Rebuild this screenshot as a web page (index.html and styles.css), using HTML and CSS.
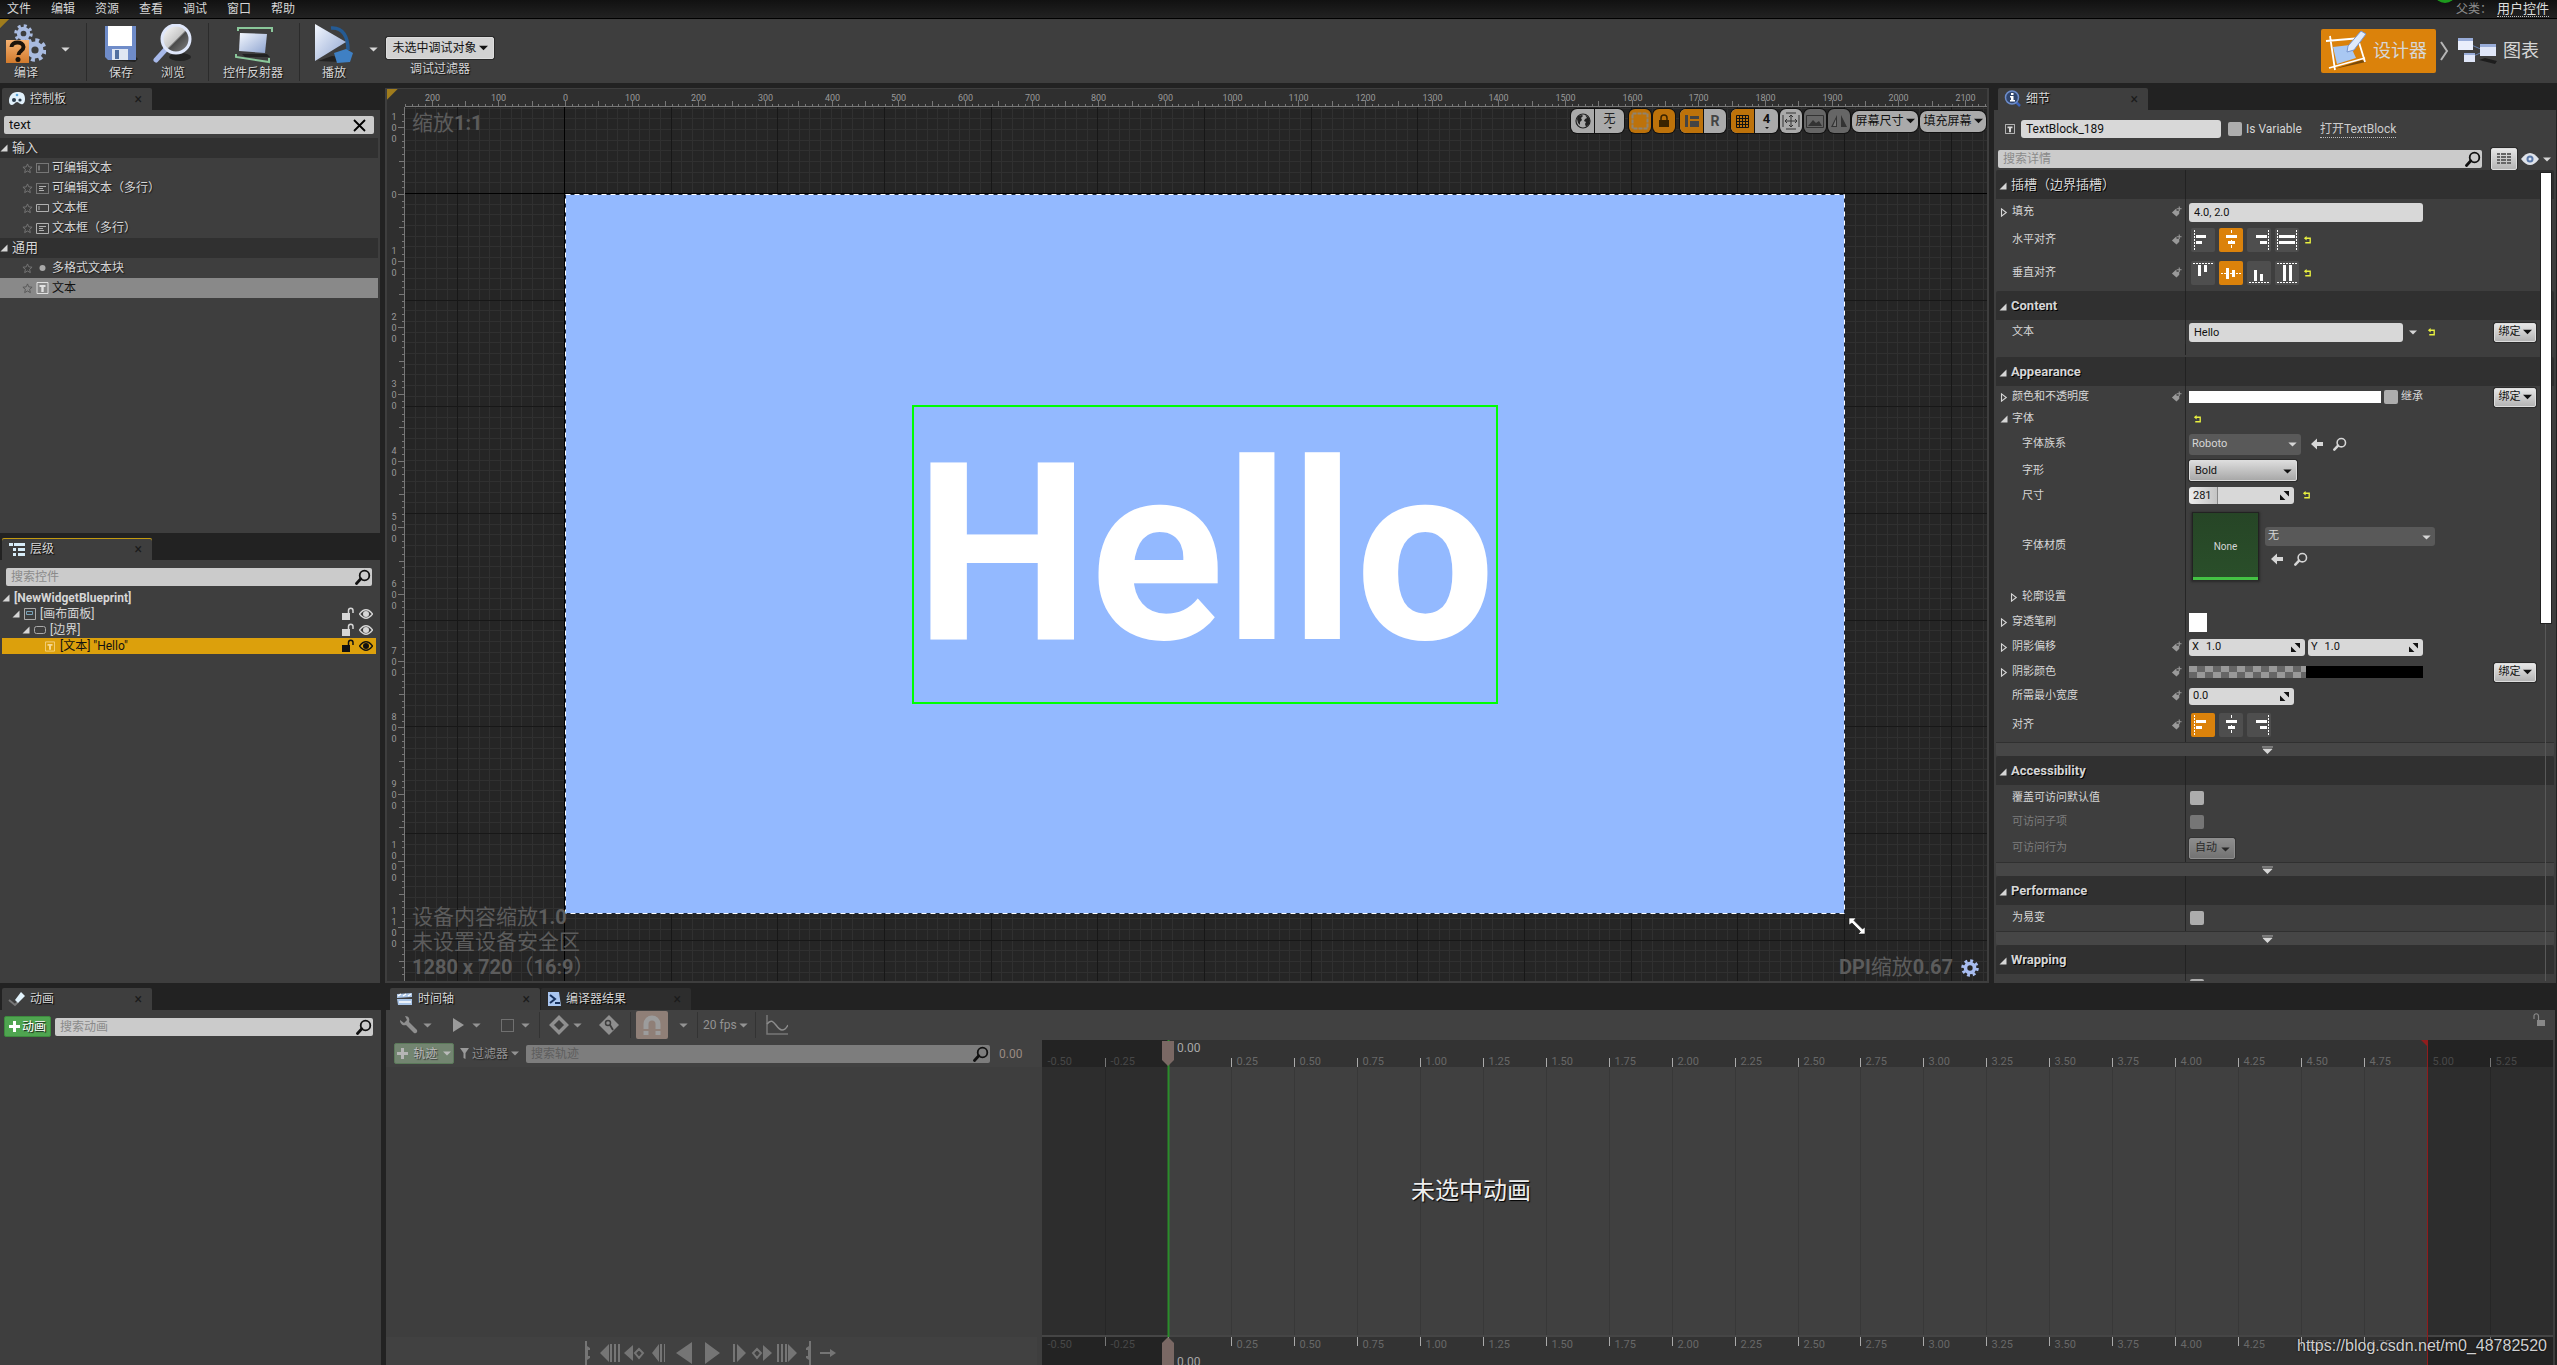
FILE: index.html
```html
<!DOCTYPE html>
<html lang="zh-CN">
<head>
<meta charset="utf-8">
<title>NewWidgetBlueprint</title>
<link rel="stylesheet" href="styles.css">
</head>
<body>
<svg class="sprite" aria-hidden="true">
  <defs>
    <linearGradient id="steel" x1="0" y1="0" x2="1" y2="1"><stop offset="0" stop-color="#f4f8ff"/><stop offset="1" stop-color="#8ea4d0"/></linearGradient>
    <linearGradient id="box" x1="0" y1="0" x2="0" y2="1"><stop offset="0" stop-color="#f6b272"/><stop offset="1" stop-color="#d27a2c"/></linearGradient>
    <linearGradient id="lens" x1="0" y1="0" x2="1" y2="1"><stop offset="0" stop-color="#ffffff"/><stop offset=".5" stop-color="#c8c8c8"/><stop offset=".55" stop-color="#4a4a4a"/><stop offset="1" stop-color="#8a8a8a"/></linearGradient>
  </defs>
  <symbol id="find" viewBox="0 0 16 16"><circle cx="9.500" cy="6.500" r="4.800" fill="none" stroke="currentColor" stroke-width="1.800"/><path d="M5.800 9.800 1.500 14.500" stroke="currentColor" stroke-width="2.800" stroke-linecap="round"/></symbol>
  <symbol id="star" viewBox="0 0 12 12"><path d="M6 1l1.400 3.200 3.600.4-2.700 2.300.8 3.600L6 8.700l-3.100 1.800.8-3.600L1 4.600l3.600-.4z" fill="none" stroke="currentColor"/></symbol>
  <symbol id="tag" viewBox="0 0 12 12"><path d="M1 6.500 6 2v2.500h3V8L6 11z" fill="currentColor"/><path d="M9 0v5M6.500 2.500h5" stroke="currentColor" stroke-width="1.200"/></symbol>
  <symbol id="reset" viewBox="0 0 10 10"><path d="M4 0v5L1 2.500z" fill="#e8f040"/><path d="M3 2.500h5v5H2.500" fill="none" stroke="#e8f040" stroke-width="1.500"/></symbol>
  <symbol id="tri" viewBox="0 0 8 8"><path d="M7.500.5v7h-7z" fill="currentColor"/></symbol>
  <symbol id="shut" viewBox="0 0 6 8"><path d="M.8.800 5 4 .8 7.200z" fill="none" stroke="currentColor"/></symbol>
  <symbol id="caret" viewBox="0 0 10 6"><path d="M0 .5h10L5 5.500z" fill="currentColor"/></symbol>
  <symbol id="tee" viewBox="0 0 12 12"><path d="M.5.500h11v11H.5z" fill="none" stroke="currentColor"/><path d="M3 3h6v2H7.200v5H4.800V5H3z" fill="currentColor"/></symbol>
  <symbol id="unlock" viewBox="0 0 14 14"><path d="M1 6h8v7H1z" fill="currentColor"/><path d="M7.500 6V3.500a2.200 2.200 0 0 1 4.500 0V6" fill="none" stroke="currentColor" stroke-width="1.500"/></symbol>
  <symbol id="eye" viewBox="0 0 14 10"><path d="M.5 5Q7-3.500 13.500 5 7 13.500.5 5z" fill="none" stroke="currentColor" stroke-width="1.300"/><circle cx="7" cy="5" r="3" fill="currentColor"/></symbol>
  <symbol id="back" viewBox="0 0 12 12"><path d="M0 6l6-5.500V4h6v4H6v3.500z" fill="currentColor"/></symbol>
  <symbol id="spin" viewBox="0 0 10 10"><path d="M4 0h6v6zM0 4v6h6z" fill="currentColor"/></symbol>
  <symbol id="more" viewBox="0 0 12 8"><path d="M0 .7h12M1 3h10L6 8z" fill="currentColor" stroke="currentColor" stroke-width=".8"/></symbol>
  <symbol id="hl" viewBox="0 0 24 24"><path d="M3.500 2v20" stroke="#fff" stroke-dasharray="2 1"/><path d="M5 7h10v3H5zM5 13h6v3H5z" fill="#fff"/></symbol>
  <symbol id="hc" viewBox="0 0 24 24"><path d="M12.500 2v20" stroke="#fff" stroke-dasharray="3 2"/><path d="M7 7h11v3H7zM9 13h7v3H9z" fill="#fff"/></symbol>
  <symbol id="hr" viewBox="0 0 24 24"><path d="M21.500 2v20" stroke="#fff" stroke-dasharray="2 1"/><path d="M9 7h11v3H9zM13 13h7v3h-7z" fill="#fff"/></symbol>
  <symbol id="hf" viewBox="0 0 24 24"><path d="M2.500 2v20M21.500 2v20" stroke="#fff" stroke-dasharray="2 1"/><path d="M4 7h16v3H4zM4 13h16v3H4z" fill="#fff"/></symbol>
  <symbol id="vt" viewBox="0 0 24 24"><path d="M2 2.500h20" stroke="#fff" stroke-dasharray="2 1"/><path d="M7 4h3v11H7zM13 4h3v7h-3z" fill="#fff"/></symbol>
  <symbol id="vc" viewBox="0 0 24 24"><path d="M2 12.500h20" stroke="#fff" stroke-dasharray="2 1"/><path d="M7 7h3v11H7zM13 9h3v7h-3z" fill="#fff"/></symbol>
  <symbol id="vb" viewBox="0 0 24 24"><path d="M2 21.500h20" stroke="#fff" stroke-dasharray="2 1"/><path d="M7 9h3v11H7zM13 13h3v7h-3z" fill="#fff"/></symbol>
  <symbol id="vf" viewBox="0 0 24 24"><path d="M2 2.500h20M2 21.500h20" stroke="#fff" stroke-dasharray="2 1"/><path d="M8 4h3v16H8zM14 4h3v16h-3z" fill="#fff"/></symbol>
  <symbol id="gear" viewBox="-10 -10 20 20"><circle r="5" fill="none" stroke="currentColor" stroke-width="4"/><circle r="8" fill="none" stroke="currentColor" stroke-width="3.500" stroke-dasharray="3.140 3.140"/></symbol>
</svg>

<nav class="menubar" aria-label="主菜单">
  <button>文件</button><button>编辑</button><button>资源</button><button>查看</button><button>调试</button><button>窗口</button><button>帮助</button>
  <p class="parent">父类：<a href="#parent">用户控件</a></p>
  <i class="status"></i>
</nav>

<header class="toolbar">
  <button class="tool compile"><svg width="40" height="40" viewBox="0 0 40 40"><g color="#a9bbe0"><use href="#gear" x="8" y="0" width="19" height="19"/><use href="#gear" x="17" y="14" width="24" height="24"/></g><path d="M0 16h23v23H0z" fill="url(#box)"/><path d="M5.500 23c0-6 12-6 12 0 0 4-5 4-5 8" fill="none" stroke="#1c130b" stroke-width="4"/><circle cx="12" cy="35.500" r="2.500" fill="#1c130b"/></svg><span>编译</span></button>
  <button class="drop" aria-label="编译选项"><svg width="9" height="5"><use href="#caret"/></svg></button>
  <i class="bar"></i>
  <button class="tool save"><svg width="40" height="40" viewBox="0 0 40 40"><path d="M9 36 34 38l3-3-3-3z" fill="#222"/><path d="M4 2h31v34H7l-3-3z" fill="#6f8cc9"/><path d="M7 2h24v20H7z" fill="#fff"/><path d="M11 25h16v11H11z" fill="#dfe6f2"/><path d="M14 26h4v9h-4z" fill="#53709f"/></svg><span>保存</span></button>
  <button class="tool browse"><svg width="40" height="40" viewBox="0 0 40 40"><ellipse cx="27" cy="33" rx="11" ry="4" fill="#222"/><path d="M13 25 3 36" stroke="#a7b9ea" stroke-width="5" stroke-linecap="round"/><circle cx="23" cy="15" r="14" fill="url(#lens)" stroke="#dfe7fb" stroke-width="3"/></svg><span>浏览</span></button>
  <i class="bar"></i>
  <button class="tool reflect"><svg width="40" height="40" viewBox="0 0 40 40"><path d="M5 7V4h34v4M3 30v3l33 5v-4" fill="none" stroke="#8ac79a" stroke-width="2"/><path d="M9 30h25l3 3H12z" fill="#222"/><path d="M7 9l27 1-2 19-26-2z" fill="url(#steel)"/></svg><span>控件反射器</span></button>
  <i class="bar"></i>
  <button class="tool play"><svg width="40" height="40" viewBox="0 0 40 40"><path d="M4 37l22 1 8-4-16-2z" fill="#222"/><path d="M17 4c12-1 17 9 17 22" fill="none" stroke="#255b94" stroke-width="3.500"/><path d="M20 29l12-4 7 4-3 9-13 1z" fill="#3f80c4"/><path d="M1 0l31 18L1 37z" fill="url(#steel)"/></svg><span>播放</span></button>
  <button class="drop" aria-label="播放选项"><svg width="9" height="5"><use href="#caret"/></svg></button>
  <div class="debug">
    <button class="btn" id="dbg">未选中调试对象<svg width="9" height="6"><use href="#caret"/></svg></button>
    <label for="dbg">调试过滤器</label>
  </div>
  <div class="modes">
    <button class="mode on"><svg width="42" height="42" viewBox="0 0 42 42"><path d="M9 39 41 32l-4-2z" fill="#7a4a08"/><path d="M1 11l35-3M5 6l5 34M33 9l7 23M4 38l36-10" fill="none" stroke="#fff" stroke-width="1.800"/><path d="M8 17l17-2 6 13-19 6z" fill="#a9c8f2"/><path d="M23 16 36 1l5 3-12 16-7 2z" fill="#dfeafc" stroke="#7695cf"/></svg>设计器</button>
    <svg class="chev" width="9" height="20" viewBox="0 0 9 20"><path d="M1 1l6 9-6 9" fill="none" stroke="#b5b5b5" stroke-width="2"/></svg>
    <button class="mode"><svg width="40" height="28" viewBox="0 0 40 28"><path d="M10 6 28 14 14 20" fill="none" stroke="#6680b0"/><path d="M22 23l16 4 2-3-12-3z" fill="#1d1d1d"/><path d="M1 1h15v12H1z" fill="#e9eefb"/><path d="M23 7h16v12H23z" fill="#dfe6f8"/><path d="M7 16h11v9H7z" fill="#dfe6f8"/><path d="M1 1h15v3H1zM23 7h16v3H23zM7 16h11v2H7z" fill="#98acd8"/></svg>图表</button>
  </div>
</header>

<main class="work">
  <div class="left">
    <section class="dock palette">
      <div class="tabs"><button class="tab"><svg width="18" height="16" viewBox="0 0 18 16"><path d="M9 1C4 1 1 5 1 10c0 4 3 5 5 3s3-3 5-1 6 2 6-4S14 1 9 1z" fill="#e2f1fb"/><circle cx="6" cy="9" r="2" fill="#2c3d4c"/><circle cx="12" cy="9" r="1.600" fill="#2c3d4c"/><circle cx="9" cy="4" r="1.300" fill="#5aa5da"/></svg>控制板<i>×</i></button></div>
      <div class="panel">
        <div class="search wide"><input aria-label="搜索控件类型" value="text"><svg width="13" height="13" viewBox="0 0 13 13"><path d="M1 1l11 11M12 1 1 12" stroke="#000" stroke-width="1.800"/></svg></div>
        <ul class="list">
          <li class="cat"><svg width="8" height="8"><use href="#tri"/></svg>输入</li>
          <li><svg class="st" width="11" height="11"><use href="#star"/></svg><svg width="13" height="10" viewBox="0 0 13 10"><path d="M.5.500h12v9H.5z" fill="none" stroke="#b0b0b0" stroke-dasharray="1 1"/><path d="M3 2.500v5" stroke="#b0b0b0"/></svg>可编辑文本</li>
          <li><svg class="st" width="11" height="11"><use href="#star"/></svg><svg width="13" height="11" viewBox="0 0 13 11"><path d="M.5.500h12v10H.5z" fill="none" stroke="#b0b0b0" stroke-dasharray="1 1"/><path d="M3 3.500h7M3 5.500h4M3 7.500h5" stroke="#b0b0b0"/></svg>可编辑文本（多行）</li>
          <li><svg class="st" width="11" height="11"><use href="#star"/></svg><svg width="13" height="10" viewBox="0 0 13 10"><path d="M.5 1.500h12v7H.5z" fill="none" stroke="#b0b0b0"/><path d="M3 3v4" stroke="#b0b0b0"/></svg>文本框</li>
          <li><svg class="st" width="11" height="11"><use href="#star"/></svg><svg width="13" height="11" viewBox="0 0 13 11"><path d="M.5.500h12v10H.5z" fill="none" stroke="#b0b0b0"/><path d="M3 3.500h7M3 5.500h4M3 7.500h5" stroke="#b0b0b0"/></svg>文本框（多行）</li>
          <li class="cat"><svg width="8" height="8"><use href="#tri"/></svg>通用</li>
          <li><svg class="st" width="11" height="11"><use href="#star"/></svg><svg width="13" height="10" viewBox="0 0 13 10"><circle cx="6.500" cy="5" r="3" fill="#aaa"/></svg>多格式文本块</li>
          <li class="sel"><svg class="st" width="11" height="11"><use href="#star"/></svg><svg class="pale" width="13" height="12"><use href="#tee"/></svg>文本</li>
        </ul>
      </div>
    </section>
    <section class="dock tree-dock">
      <div class="tabs"><button class="tab active"><svg width="18" height="14" viewBox="0 0 18 14"><path d="M1 1h4v3H1zM6 1h11v3H6zM5 6h3v3H5zM10 6h7v3h-7zM5 11h3v3H5zM10 11h7v3h-7z" fill="#d7ecf8"/></svg>层级<i>×</i></button></div>
      <div class="panel">
        <div class="search inset"><input aria-label="搜索控件" placeholder="搜索控件"><svg width="16" height="16"><use href="#find"/></svg></div>
        <ul class="tree">
          <li class="d0"><svg width="8" height="8"><use href="#tri"/></svg><b>[NewWidgetBlueprint]</b></li>
          <li class="d1"><svg width="8" height="8"><use href="#tri"/></svg><svg width="12" height="12" viewBox="0 0 12 12"><path d="M.5.500h11v11H.5z" fill="none" stroke="#aaa"/><path d="M2.500 3.500h6v3h-6z" fill="none" stroke="#7aa2b8"/></svg>[画布面板]<span class="flags"><svg width="14" height="14"><use href="#unlock"/></svg><svg width="14" height="10"><use href="#eye"/></svg></span></li>
          <li class="d2"><svg width="8" height="8"><use href="#tri"/></svg><svg width="12" height="12" viewBox="0 0 12 12"><rect x=".5" y="2.500" width="11" height="7" rx="2" fill="none" stroke="#aaa"/></svg>[边界]<span class="flags"><svg width="14" height="14"><use href="#unlock"/></svg><svg width="14" height="10"><use href="#eye"/></svg></span></li>
          <li class="d3"><svg class="pale" width="10" height="11"><use href="#tee"/></svg>[文本] "Hello"<span class="flags"><svg width="14" height="14"><use href="#unlock"/></svg><svg width="14" height="10"><use href="#eye"/></svg></span></li>
        </ul>
      </div>
    </section>
  </div>

  <section class="viewport">
    <svg id="ruler-x" class="ruler-x"></svg>
    <svg id="ruler-y" class="ruler-y"></svg>
    <div class="surface">
      <svg id="grid" class="grid"></svg>
      <div class="canvas"><div class="picked">Hello</div></div>
      <svg class="frame"><rect x=".5" y=".5" width="1279" height="719" fill="none" stroke="#1a2538"/><rect x=".5" y=".5" width="1279" height="719" fill="none" stroke="#fff" stroke-dasharray="5 4"/></svg>
      <p class="hud zoom">缩放<b>1:1</b></p>
      <p class="hud info">设备内容缩放<b>1.0</b><br>未设置设备安全区<br><b>1280 x 720</b>（<b>16:9</b>）</p>
      <p class="hud dpi"><b>DPI</b>缩放<b>0.67</b><svg width="18" height="18"><use href="#gear"/></svg></p>
      <svg class="grip" width="18" height="18" viewBox="0 0 18 18"><path d="M1 1h7L6 3.500l8.500 8.500L17 10v7h-7l2.500-2.500L4 6 1 8z" fill="#fff" stroke="#111" stroke-width=".6"/></svg>
      <div class="vtools">
        <div class="grp g1"><button aria-label="本地化"><svg width="16" height="16" viewBox="0 0 16 16"><circle cx="8" cy="8" r="7" fill="none" stroke="#222" stroke-width="1.200"/><path d="M3 3l4-1 1 1-2 2 1 2-2 2 0 3-2-2-1-4zM10 2l3 2 2 3-1 4-3 3-1-3 1-2-2-1 1-2 2-1z" fill="#222"/></svg></button><button class="drp">无</button></div>
        <button class="sq hot" aria-label="虚线轮廓"><svg width="18" height="18" viewBox="0 0 18 18"><path d="M1.500 1.500h15v15h-15z" fill="none" stroke="#8f8370" stroke-width="2" stroke-dasharray="4 1"/></svg></button>
        <button class="sq hot" aria-label="遵循锁定"><svg width="12" height="14" viewBox="0 0 12 14"><path d="M1 6h10v7H1z" fill="#3a2400"/><path d="M3 6V4a3 3 0 0 1 6 0v2" fill="none" stroke="#3a2400" stroke-width="1.500"/></svg></button>
        <div class="grp g2"><button class="hot" aria-label="布局"><svg width="16" height="14" viewBox="0 0 16 14"><path d="M1 1h3v12H1zM6 2h9v3H6zM6 7h9v6H6z" fill="#444"/></svg></button><button><b>R</b></button></div>
        <div class="grp g3"><button class="hot" aria-label="网格对齐"><svg width="13" height="13" viewBox="0 0 13 13"><path d="M.5.500h12v12H.5zM3.500 0v13M6.500 0v13M9.500 0v13M0 3.500h13M0 6.500h13M0 9.500h13" fill="none" stroke="#111"/></svg></button><button class="drp"><b>4</b></button></div>
        <button class="sq" aria-label="缩放适配"><svg width="18" height="18" viewBox="0 0 18 18"><path d="M9 3v12M3 9h12M1 3v12M17 3v12M4 1h10M4 17h10M7 5l2-2 2 2M7 13l2 2 2-2M5 7 3 9l2 2M13 7l2 2-2 2" fill="none" stroke="#333"/></svg></button>
        <button class="sq dim" aria-label="预览背景"><svg width="18" height="13" viewBox="0 0 18 13"><path d="M.5.500h17v12H.5z" fill="none" stroke="#333"/><path d="M2 11l5-6 3 3 3-2 3 5z" fill="#333"/></svg></button>
        <button class="sq dim" aria-label="翻转"><svg width="18" height="14" viewBox="0 0 18 14"><path d="M7 1v12H1zM11 1v12h6z" fill="#333"/><path d="M6 5v7H3z" fill="#777"/></svg></button>
        <button class="pill">屏幕尺寸<svg width="9" height="6"><use href="#caret"/></svg></button>
        <button class="pill">填充屏幕<svg width="9" height="6"><use href="#caret"/></svg></button>
      </div>
    </div>
  </section>

  <section class="dock details">
    <div class="tabs"><button class="tab"><svg width="18" height="18" viewBox="0 0 18 18"><path d="M12 12l4 4" stroke="#3c62b8" stroke-width="2.500"/><circle cx="8" cy="7.500" r="6.500" fill="#30456c" stroke="#6c8ccb" stroke-width="1.500"/><path d="M7 3h2.500v2H7zM6 6h3.500v4H11v1.500H6V10h1V7.500H6z" fill="#fff"/></svg>细节<i>×</i></button></div>
    <div class="panel">
      <div class="ident"><svg width="10" height="10"><use href="#tee"/></svg><input class="field" aria-label="名称" value="TextBlock_189"><input type="checkbox" id="isvar"><label for="isvar">Is Variable</label><a href="#textblock">打开TextBlock</a></div>
      <div class="find-row"><div class="search"><input aria-label="搜索详情" placeholder="搜索详情"><svg width="16" height="16"><use href="#find"/></svg></div><button class="btn matrix" aria-label="属性矩阵"><svg width="14" height="14" viewBox="0 0 14 14"><path d="M0 1h3v2H0zM4 1h5v2H4zM10 1h4v2h-4zM0 4h3v2H0zM4 4h5v2H4zM10 4h4v2h-4zM0 7h3v2H0zM4 7h5v2H4zM10 7h4v2h-4zM0 10h3v2H0zM4 10h5v2H4zM10 10h4v2h-4z" fill="#666"/></svg></button><button class="view" aria-label="视图选项"><svg width="18" height="12" viewBox="0 0 18 12"><path d="M0 6q9-12 18 0-9 12-18 0z" fill="#dfe3ea"/><circle cx="9" cy="6" r="3.500" fill="#5a78a8"/><circle cx="9" cy="6" r="1.500" fill="#d8e4f5"/></svg><svg width="8" height="5"><use href="#caret"/></svg></button></div>
      <div class="props">
        <div class="scroll"></div>
        <h2><svg width="8" height="8"><use href="#tri"/></svg><span class="cn">插槽（边界插槽）</span></h2>
        <div class="row h26"><label class="name" for="pad"><svg class="ex" width="6" height="9"><use href="#shut"/></svg>填充<svg class="tag" width="11" height="12"><use href="#tag"/></svg></label><div class="val"><input class="field w234" id="pad" value="4.0, 2.0"></div></div>
        <div class="row h30"><span class="name">水平对齐<svg class="tag" width="11" height="12"><use href="#tag"/></svg></span><div class="val aligns"><button aria-label="左"><svg><use href="#hl"/></svg></button><button class="hot" aria-label="居中"><svg><use href="#hc"/></svg></button><button aria-label="右"><svg><use href="#hr"/></svg></button><button aria-label="填充"><svg><use href="#hf"/></svg></button><svg width="9" height="9"><use href="#reset"/></svg></div></div>
        <div class="row h36"><span class="name">垂直对齐<svg class="tag" width="11" height="12"><use href="#tag"/></svg></span><div class="val aligns"><button aria-label="上"><svg><use href="#vt"/></svg></button><button class="hot" aria-label="居中"><svg><use href="#vc"/></svg></button><button aria-label="下"><svg><use href="#vb"/></svg></button><button aria-label="填充"><svg><use href="#vf"/></svg></button><svg width="9" height="9"><use href="#reset"/></svg></div></div>
        <h2><svg width="8" height="8"><use href="#tri"/></svg>Content</h2>
        <div class="row h24 last"><label class="name" for="txt">文本</label><div class="val"><input class="field w214" id="txt" value="Hello"><svg class="g6" width="8" height="5"><use href="#caret"/></svg><svg class="g10" width="9" height="9"><use href="#reset"/></svg><button class="btn bind">绑定<svg width="9" height="6"><use href="#caret"/></svg></button></div></div>
        <h2><svg width="8" height="8"><use href="#tri"/></svg>Appearance</h2>
        <div class="row h22"><span class="name"><svg class="ex" width="6" height="9"><use href="#shut"/></svg>颜色和不透明度<svg class="tag" width="11" height="12"><use href="#tag"/></svg></span><div class="val"><button class="swatch white" aria-label="颜色"></button><input type="checkbox" id="inh"><label for="inh">继承</label><button class="btn bind">绑定<svg width="9" height="6"><use href="#caret"/></svg></button></div></div>
        <div class="row h22"><span class="name"><svg class="ex" width="8" height="8"><use href="#tri"/></svg>字体</span><div class="val"><svg class="g4" width="9" height="9"><use href="#reset"/></svg></div></div>
        <div class="row h28"><label class="name sub" for="fam">字体族系</label><div class="val"><span class="pick w112"><select id="fam"><option>Roboto</option></select><svg width="9" height="5"><use href="#caret"/></svg></span><svg class="g10" width="12" height="12"><use href="#back"/></svg><svg class="g10" width="14" height="14"><use href="#find"/></svg></div></div>
        <div class="row h25"><label class="name sub" for="face">字形</label><div class="val"><span class="pick light w108"><select id="face"><option>Bold</option></select><svg width="9" height="5"><use href="#caret"/></svg></span></div></div>
        <div class="row h25"><label class="name sub" for="size">尺寸</label><div class="val"><span class="num w105 part"><input id="size" value="281"><svg width="9" height="9"><use href="#spin"/></svg></span><svg class="g8" width="9" height="9"><use href="#reset"/></svg></div></div>
        <div class="row h76"><label class="name sub" for="mat">字体材质</label><div class="val"><button class="thumb">None</button><div class="mat"><span class="pick w170"><select id="mat"><option>无</option></select><svg width="9" height="5"><use href="#caret"/></svg></span><div class="acts"><svg width="12" height="12"><use href="#back"/></svg><svg width="14" height="14"><use href="#find"/></svg></div></div></div></div>
        <div class="row h26"><span class="name sub"><svg class="ex" width="6" height="9"><use href="#shut"/></svg>轮廓设置</span><div class="val"></div></div>
        <div class="row h24"><span class="name"><svg class="ex" width="6" height="9"><use href="#shut"/></svg>穿透笔刷</span><div class="val"><button class="brush" aria-label="笔刷"></button></div></div>
        <div class="row h26"><span class="name"><svg class="ex" width="6" height="9"><use href="#shut"/></svg>阴影偏移<svg class="tag" width="11" height="12"><use href="#tag"/></svg></span><div class="val"><label class="num w116">X<input value="1.0"><svg width="9" height="9"><use href="#spin"/></svg></label><label class="num w115 g2x">Y<input value="1.0"><svg width="9" height="9"><use href="#spin"/></svg></label></div></div>
        <div class="row h24"><span class="name"><svg class="ex" width="6" height="9"><use href="#shut"/></svg>阴影颜色<svg class="tag" width="11" height="12"><use href="#tag"/></svg></span><div class="val"><button class="swatch check" aria-label="阴影颜色"></button><button class="btn bind">绑定<svg width="9" height="6"><use href="#caret"/></svg></button></div></div>
        <div class="row h24"><label class="name" for="minw">所需最小宽度<svg class="tag" width="11" height="12"><use href="#tag"/></svg></label><div class="val"><span class="num w105"><input id="minw" value="0.0"><svg width="9" height="9"><use href="#spin"/></svg></span></div></div>
        <div class="row h34"><span class="name">对齐<svg class="tag" width="11" height="12"><use href="#tag"/></svg></span><div class="val aligns"><button class="hot" aria-label="左"><svg><use href="#hl"/></svg></button><button aria-label="居中"><svg><use href="#hc"/></svg></button><button aria-label="右"><svg><use href="#hr"/></svg></button></div></div>
        <button class="more" aria-label="展开"><svg width="11" height="8"><use href="#more"/></svg></button>
        <h2><svg width="8" height="8"><use href="#tri"/></svg>Accessibility</h2>
        <div class="row h25"><label class="name" for="ovr">覆盖可访问默认值</label><div class="val tick"><input type="checkbox" id="ovr"></div></div>
        <div class="row h24 off"><label class="name" for="kid">可访问子项</label><div class="val tick"><input type="checkbox" id="kid" disabled></div></div>
        <div class="row h28 off"><label class="name" for="beh">可访问行为</label><div class="val"><span class="pick light w46"><select id="beh" disabled><option>自动</option></select><svg width="9" height="5"><use href="#caret"/></svg></span></div></div>
        <button class="more" aria-label="展开"><svg width="11" height="8"><use href="#more"/></svg></button>
        <h2><svg width="8" height="8"><use href="#tri"/></svg>Performance</h2>
        <div class="row h26"><label class="name" for="vol">为易变</label><div class="val tick"><input type="checkbox" id="vol"></div></div>
        <button class="more" aria-label="展开"><svg width="11" height="8"><use href="#more"/></svg></button>
        <h2><svg width="8" height="8"><use href="#tri"/></svg>Wrapping</h2>
        <div class="row h24"><label class="name" for="wrap"></label><div class="val tick"><input type="checkbox" id="wrap"></div></div>
      </div>
    </div>
  </section>
</main>

<section class="bottom">
  <section class="dock anim">
    <div class="tabs"><button class="tab"><svg width="18" height="16" viewBox="0 0 18 16"><path d="M1 9l6 5 3-3" fill="none" stroke="#777" stroke-width="2"/><path d="M7 9l6-8 4 4-7 7z" fill="#e2f3fc"/></svg>动画<i>×</i></button></div>
    <div class="panel"><div class="add-row"><button class="add"><svg width="11" height="11" viewBox="0 0 11 11"><path d="M5.500 0v11M0 5.500h11" stroke="#fff" stroke-width="3"/></svg>动画</button><div class="search"><input aria-label="搜索动画" placeholder="搜索动画"><svg width="16" height="16"><use href="#find"/></svg></div></div></div>
  </section>
  <section class="dock time">
    <div class="tabs"><button class="tab"><svg width="18" height="14" viewBox="0 0 18 14"><path d="M1 2l15-1v4L1 6zM1 7h15v6H2z" fill="#a9c4e6"/><path d="M2 4l3-2M7 4l3-2M12 4l3-2M3 10h12" stroke="#fff" stroke-width="1.500"/></svg>时间轴<i>×</i></button><button class="tab back"><svg width="15" height="16" viewBox="0 0 15 16"><path d="M1 1h11l2 14H1z" fill="#a9c6f0"/><path d="M3 4l5 4-5 4M8 12h5" fill="none" stroke="#16305c" stroke-width="2"/></svg>编译器结果<i>×</i></button></div>
    <div class="panel seq">
      <div class="seq-tools">
        <button class="ic" aria-label="操作"><svg width="18" height="18" viewBox="0 0 18 18"><path d="M5 0C9 0 10 3 9 6l8 8c1 2-1 4-3 3L6 9C3 10 0 8 0 4l4 3 3-3z" fill="#8f8f8f"/></svg><svg width="9" height="5"><use href="#caret"/></svg></button>
        <button class="ic i2" aria-label="播放选项"><svg width="12" height="14" viewBox="0 0 12 14"><path d="M0 0l11 7-11 7z" fill="#9a9a9a"/></svg><svg width="9" height="5"><use href="#caret"/></svg></button>
        <button class="ic i3" aria-label="选择"><svg width="13" height="13" viewBox="0 0 13 13"><path d="M.5.500h12v12H.5z" fill="none" stroke="#a0a0a0" stroke-dasharray="1 1"/></svg><svg width="9" height="5"><use href="#caret"/></svg></button>
        <i class="bar"></i>
        <button class="ic i4" aria-label="关键帧"><svg width="20" height="20" viewBox="0 0 20 20"><path d="M10 2.500 17.500 10 10 17.500 2.500 10z" fill="none" stroke="#8f8f8f" stroke-width="3.500"/></svg><svg width="9" height="5"><use href="#caret"/></svg></button>
        <button class="ic i5" aria-label="自动关键帧"><svg width="20" height="20" viewBox="0 0 20 20"><path d="M10 0 20 10 10 20 0 10z" fill="#8f8f8f"/><circle cx="9" cy="8" r="2.500" fill="none" stroke="#3e3e3e" stroke-width="1.500"/><path d="M11 10l3 5" stroke="#3e3e3e" stroke-width="1.800"/></svg></button>
        <i class="bar"></i>
        <button class="magnet" aria-label="对齐"><svg width="20" height="20" viewBox="0 0 20 20"><path d="M4 14V9a6 6 0 0 1 12 0v5" fill="none" stroke="#9c9c9c" stroke-width="5"/><path d="M1.500 16h5v4h-5zM13.500 16h5v4h-5z" fill="#9c9c9c"/></svg></button>
        <button class="ic i6" aria-label="对齐选项"><svg width="9" height="5"><use href="#caret"/></svg></button>
        <i class="bar"></i>
        <button class="ic fps">20 fps<svg width="9" height="5"><use href="#caret"/></svg></button>
        <i class="bar"></i>
        <button class="ic i7" aria-label="曲线"><svg width="22" height="20" viewBox="0 0 22 20"><path d="M1 0v19h21" fill="none" stroke="#777" stroke-width="1.500"/><path d="M1 9C8 0 10 15 16 15c3 0 5-3 6-5" fill="none" stroke="#8c8c8c" stroke-width="1.500"/></svg></button>
        <svg class="lock" width="13" height="14" viewBox="0 0 13 14"><path d="M4 7h8v6H4z" fill="#888"/><path d="M1 6V3a2 2 0 0 1 4.500 0v4" fill="none" stroke="#888" stroke-width="1.200"/></svg>
      </div>
      <div class="seq-body">
        <div class="tracks">
          <div class="track-row"><button class="track"><svg width="11" height="11" viewBox="0 0 11 11"><path d="M5.500 0v11M0 5.500h11" stroke="#b5b5b5" stroke-width="3"/></svg>轨迹<svg width="8" height="5"><use href="#caret"/></svg></button><button class="filter"><svg width="9" height="11" viewBox="0 0 9 11"><path d="M0 0h9L5.500 5v6l-2-1V5z" fill="#999"/></svg>过滤器<svg width="8" height="5"><use href="#caret"/></svg></button><div class="search"><input aria-label="搜索轨迹" placeholder="搜索轨迹"><svg width="16" height="16"><use href="#find"/></svg></div><span class="now">0.00</span></div>
          <div class="transport"><svg width="256" height="26" viewBox="0 0 256 26" fill="#757575"><path d="M0 1h2v5l3 2v2H3v6h2v2l-3 2v5H0zM15 13l9-9v18zM25 4h2v18h-2zM29 4h2v18h-2zM33 4h2v18h-2zM39 13l9-8v16zM67 13l7-9v18zM75 4h2v18h-2zM79 4h1v18h-1zM91 13l16-11v22zM135 13 120 2v22zM148 4h2v18h-2zM152 4l9 9-9 9zM178 5l9 8-9 8zM192 4h2v18h-2zM196 4h2v18h-2zM200 4h2v18h-2zM203 4l9 9-9 9zM226 1h-2v5l-3 2v2h2v6h-2v2l3 2v5h2zM235 12h10V9l6 4-6 4v-3h-10z"/><path d="M54 9l4 4-4 5-4-5zM172 9l4 4-4 5-4-5z" fill="none" stroke="#757575" stroke-width="2"/></svg></div>
        </div>
        <div class="timeline"><svg id="timeline"></svg><p class="empty">未选中动画</p></div>
      </div>
    </div>
  </section>
</section>
<p class="mark">https://blog.csdn.net/m0_48782520</p>
<script src="script.js"></script>
</body>
</html>
```
FILE: styles.css
```css
* { box-sizing: border-box; }
body { margin: 0; height: 100vh; overflow: hidden; display: flex; flex-direction: column; background: #222; color: #d6d6d6; font: 12px/16px Roboto, "Noto Sans CJK SC", sans-serif; }
button, input, select { font: inherit; color: inherit; margin: 0; padding: 0; border: 0; background: none; border-radius: 0; outline: 0; min-width: 0; }
button { text-shadow: inherit; white-space: nowrap; }
p, ul, h2 { margin: 0; padding: 0; list-style: none; }
svg { flex: none; display: block; }
i { font-style: normal; }
.sprite { position: absolute; width: 0; height: 0; }

.menubar { position: relative; flex: none; height: 19px; display: flex; align-items: center; gap: 20px; padding: 0 7px; background: linear-gradient(#111, #222); border-bottom: 1px solid #000; }
.parent { margin-left: auto; padding-right: 1px; color: #8c8c8c; }
.parent a { margin-left: 5px; color: #ddd; font-size: 13px; text-decoration: none; border-bottom: 1px dotted #bbb; }
.status { position: absolute; right: 102px; top: -14px; width: 20px; height: 17px; border-radius: 50%; background: #1d9a1d; }

.toolbar { flex: none; height: 64px; display: flex; align-items: flex-start; padding: 0 14px 0 0; background: linear-gradient(135deg, #a07c1c 6px, #3e3e3e 7px); text-shadow: 1px 1px 1px #111; }
.tool { display: flex; flex-direction: column; align-items: center; width: 52px; padding-top: 5px; }
.tool span { line-height: 18px; }
.reflect { width: 88px; margin-right: 2px; }
.play { width: 68px; }
.save { margin-left: 8px; }
.browse { margin-right: 9px; }
.drop { width: 26px; height: 60px; margin-right: 8px; display: flex; justify-content: center; align-items: center; }
.play + .drop { width: 10px; }
.bar { flex: none; width: 1px; height: 58px; margin-top: 4px; background: #2b2b2b; }
.debug { display: flex; flex-direction: column; align-items: center; padding-top: 18px; gap: 2px; }
.btn { display: flex; align-items: center; justify-content: center; gap: 2px; color: #111; background: linear-gradient(#e6e6e6, #b4b4b4); border: 1px solid #ddd; border-radius: 2px; box-shadow: 0 0 0 1px #2a2a2a; text-shadow: none; }
.debug .btn { width: 108px; height: 22px; background: #d2d2d2; }
.modes { margin-left: auto; height: 44px; margin-top: 10px; display: flex; align-items: center; gap: 4px; }
.mode { display: flex; align-items: center; gap: 6px; height: 44px; padding: 0 4px; font-size: 18px; text-shadow: none; }
.mode.on { width: 115px; background: #db820b; border-radius: 2px; }

.work { flex: none; height: 905px; padding: 5px 1px 5px 0; display: flex; gap: 5px; }
.left { flex: none; width: 380px; display: flex; flex-direction: column; gap: 5px; }
.dock { display: flex; flex-direction: column; min-height: 0; }
.left .dock { flex: 1; }
.tabs { flex: none; display: flex; gap: 1px; height: 22px; padding-left: 2px; }
.tab { width: 150px; display: flex; align-items: center; gap: 4px; padding: 0 10px 0 6px; background: #3e3e3e; border-radius: 2px 2px 0 0; text-shadow: 1px 1px 1px #000; }
.tab i { margin-left: auto; color: #1b1b1b; font-size: 14px; text-shadow: none; }
.tab.active { box-shadow: inset 0 1px #c29a10; }
.tab.back { background: #2d2d2d; }
.panel { flex: 1; min-height: 0; background: #3e3e3e; }
.search { height: 18px; display: flex; align-items: center; padding: 0 1px 0 5px; background: #cbcbcb; border-radius: 2px; color: #111; }
.search input { flex: 1; }
.search input::placeholder { color: #8a8a8a; opacity: 1; }
.search.wide { margin: 6px 6px 4px 4px; padding-right: 8px; font-size: 13px; }
.search.inset { margin: 8px 8px 4px 6px; }
.list { margin-right: 2px; text-shadow: 1px 1px 1px #1a1a1a; }
.list li { height: 20px; display: flex; align-items: center; gap: 3px; padding-left: 22px; }
.list .st { color: #777; }
.list .cat { padding-left: 0; gap: 4px; background: #303030; font-size: 13px; }
.list .sel { background: #898989; color: #111; text-shadow: none; }
.list .sel .st { color: #555; }
.pale { color: #e0e0e0; }
.tree li { height: 16px; display: flex; align-items: center; gap: 4px; margin: 0 4px 0 2px; }
.tree .d1 { padding-left: 10px; }
.tree .d2 { padding-left: 20px; }
.tree .d3 { padding-left: 43px; gap: 5px; background: #dca00c; color: #111; }
.tree .d3 .pale { color: #f6d890; }
.flags { margin-left: auto; display: flex; align-items: center; gap: 4px; padding-right: 3px; }

.viewport { flex: 1; min-width: 0; position: relative; display: grid; grid-template: 18px 1fr / 18px 1fr; background: linear-gradient(135deg, #a07c1c 7px, #2f2f2f 8px); border: 2px solid #3e3e3e; border-top-width: 1px; overflow: hidden; }
.ruler-x { grid-column: 1 / 3; width: 100%; height: 18px; }
.ruler-y { width: 18px; height: 100%; }
.ruler-x text, .ruler-y text { font-size: 9px; fill: #999; text-anchor: middle; }
.surface { position: relative; overflow: hidden; background: #252525; }
.grid { position: absolute; left: 0; top: 0; width: 100%; height: 100%; }
.canvas, .frame { position: absolute; left: 160px; top: 87px; width: 1280px; height: 720px; }
.canvas { display: flex; align-items: center; justify-content: center; background: #93b9ff; }
.picked { border: 2px solid #0f0; padding: 1px; color: #fff; font-size: 248px; font-weight: 700; line-height: 293px; }
.hud { position: absolute; color: #5c5c5c; font-size: 21px; line-height: 25px; }
.hud b { font-size: 20px; }
.zoom { left: 7px; top: 4px; }
.info { left: 7px; bottom: 1px; }
.dpi { right: 8px; bottom: 1px; display: flex; align-items: center; }
.dpi svg { margin-left: 8px; color: #a8bdf0; }
.grip { position: absolute; left: 1443px; top: 810px; }
.vtools { position: absolute; right: 1px; top: 2px; display: flex; align-items: center; gap: 2px; color: #222; }
.vtools button { display: flex; align-items: center; justify-content: center; height: 24px; }
.grp { display: flex; background: #aaa; border-radius: 6px; overflow: hidden; box-shadow: 0 0 0 1px #111; margin-right: 3px; }
.grp button { width: 23px; }
.grp button + button { border-left: 1px solid #111; }
.g1 .drp { width: 30px; }
.g3 .drp { width: 24px; }
.g3 { margin-right: 0; }
.drp { position: relative; padding-bottom: 4px; }
.drp::after { content: ""; position: absolute; bottom: 4px; left: 50%; margin-left: -2px; border: 2px solid transparent; border-top-color: #111; border-bottom: 0; }
.g3 .drp b { color: #111; font-size: 13px; }
.g2 b { color: #444; font-size: 14px; }
.sq { width: 22px; background: #aaa; border-radius: 6px; box-shadow: 0 0 0 1px #111; }
.hot + .grp { margin-left: 3px; }
.vtools .hot { background: #bd720a; }
.dim { background: #666; }
.vtools .pill { width: 66px; height: 21px; gap: 2px; background: #aaa; border-radius: 7px; box-shadow: 0 0 0 1px #111; color: #111; }

.details { flex: none; width: 562px; }
.details .tabs { padding-left: 4px; }
.ident { display: flex; align-items: center; height: 38px; padding: 0 0 0 11px; }
.field { height: 19px; padding: 0 5px; background: #d8d8d8; border-radius: 3px; color: #111; }
.ident .field { width: 200px; height: 18px; margin: 0 7px 0 6px; }
input[type=checkbox] { appearance: none; flex: none; width: 14px; height: 14px; background: #adadad; border-radius: 2px; }
.ident label { margin-left: 4px; }
.ident a { margin-left: 18px; color: #ccc; text-decoration: none; border-bottom: 1px dotted #bbb; }
.find-row { display: flex; align-items: center; height: 22px; padding: 0 5px 0 4px; }
.find-row .search { flex: 1; }
.matrix { width: 26px; height: 22px; margin: 0 4px 0 9px; }
.view { display: flex; align-items: center; gap: 4px; }
.props { position: relative; height: 811px; overflow: hidden; margin: 0 2px; font-size: 11px; }
.scroll { position: absolute; z-index: 1; right: 3px; top: 3px; width: 10px; height: 450px; background: #fff; box-shadow: 0 0 0 1px #222; }
.props::after { content: ""; position: absolute; right: 8px; top: 453px; bottom: 0; width: 1px; background: #585858; }
h2 { display: flex; align-items: center; gap: 4px; height: 29px; padding-left: 3px; font-size: 13px; font-weight: 700; background: linear-gradient(90deg, transparent 189px, #222 189px, #222 190px, transparent 190px), #303030; text-shadow: 1px 1px 0 #000; border-radius: 2px 2px 0 0; }
h2 .cn { font-weight: 400; }
h2 svg { margin-top: 3px; }
.row { display: grid; grid-template-columns: 190px 1fr; }
.row.last { height: 37px; padding-bottom: 13px; background: linear-gradient(#222, #222) 189px 0 / 1px 35px no-repeat; }
.name { position: relative; display: flex; align-items: center; padding-left: 16px; border-right: 1px solid #262626; white-space: nowrap; }
.name.sub { padding-left: 26px; }
.name .ex { width: 8px; margin-left: -12px; margin-right: 4px; }
.name .tag { margin-left: auto; margin-right: 3px; color: #999; }
.val { display: flex; align-items: center; padding: 0 18px 0 3px; }
.val.tick { padding-left: 4px; }
.h22 { height: 22px; } .h24 { height: 24px; } .h25 { height: 25px; } .h26 { height: 26px; } .h28 { height: 28px; } .h30 { height: 30px; } .h34 { height: 34px; } .h36 { height: 36px; } .h76 { height: 76px; }
.w234 { width: 234px; } .w214 { width: 214px; } .w112 { width: 112px; } .w108 { width: 108px; } .w105 { width: 105px; } .w116 { width: 116px; } .w115 { width: 115px; } .w170 { width: 170px; } .w46 { width: 46px; }
.g2x { margin-left: 3px; } .g4 { margin-left: 4px; } .g6 { margin-left: 6px; } .g8 { margin-left: 8px; } .g10 { margin-left: 10px; }
.val > .btn { margin-left: auto; width: 42px; height: 19px; }
.aligns { gap: 4px; padding-left: 5px; }
.aligns button { width: 24px; height: 24px; background: #4e4e4e; border-radius: 2px; }
.aligns button svg { width: 24px; height: 24px; }
.aligns .hot { background: #db820b; }
.swatch { height: 12px; }
.swatch + input { margin: 0 3px; }
.white { width: 192px; background: #fff; }
.check { width: 234px; background: linear-gradient(90deg, transparent 117px, #000 117px), repeating-conic-gradient(#666 0 25%, #999 0 50%) 0 0 / 16px 12px; }
.pick { position: relative; display: block; height: 21px; background: #595959; border-radius: 3px; text-shadow: 1px 1px 1px #111; }
.pick select { appearance: none; width: 100%; height: 100%; padding-left: 3px; opacity: 1; }
.pick svg { position: absolute; right: 4px; top: 8px; pointer-events: none; }
.light { background: linear-gradient(#dcdcdc, #a8a8a8); border: 1px solid #ddd; border-radius: 2px; box-shadow: 0 0 0 1px #2a2a2a; color: #111; text-shadow: none; }
.light select { padding-left: 5px; }
.num { display: flex; align-items: center; height: 17px; padding: 0 5px 0 4px; background: #d8d8d8; border-radius: 3px; color: #111; }
.num input { flex: 1; width: 0; }
label.num { gap: 7px; padding-left: 3px; }
.part { background: linear-gradient(90deg, #ececec, #c4c4c4 28px, #888 28px, #888 29px, #d8d8d8 29px); }
.thumb { width: 67px; height: 68px; margin-left: 3px; font-size: 10px; background: linear-gradient(#264526, #2a4f2a); border: 1px solid #222; border-bottom: 0; box-shadow: inset 0 -3px #44c244, 0 1px 2px 1px #2a2a2a; }
.mat { margin-left: 6px; display: flex; flex-direction: column; gap: 6px; }
.mat .pick { height: 19px; }
.acts { display: flex; align-items: center; gap: 11px; padding-left: 6px; }
.brush { width: 18px; height: 19px; background: #fff; }
.more { width: 100%; height: 14px; display: flex; align-items: center; padding-left: 266px; background: #464646; border-top: 1px solid #303030; border-radius: 0 0 2px 2px; }
.off { color: #7d7d7d; }
.off input, .off .pick { opacity: .5; }

.bottom { flex: 1; min-height: 0; display: flex; gap: 5px; padding-right: 2px; }
.anim { flex: none; width: 381px; }
.add-row { display: flex; align-items: center; gap: 4px; padding: 6px 8px 0 4px; }
.add { display: flex; align-items: center; justify-content: center; gap: 2px; width: 47px; height: 21px; background: #4fa550; border: 1px solid #3d8b3e; border-radius: 2px; text-shadow: 1px 1px 1px #111; color: #fff; }
.add-row .search { flex: 1; }
.time { flex: 1; min-width: 0; }
.time .tabs { padding-left: 4px; }
.seq { display: flex; flex-direction: column; color: #939393; }
.seq-tools { flex: none; height: 30px; display: flex; align-items: center; padding-left: 14px; background: #414141; }
.seq-tools .bar { height: 26px; margin: 0; background: #333; }
.ic { display: flex; align-items: center; gap: 5px; }
.i2 { margin-left: 21px; gap: 7px; } .i3 { margin-left: 20px; gap: 7px; margin-right: 9px; } .i4 { margin-left: 9px; gap: 4px; } .i5 { margin: 0 11px 0 17px; } .i6 { margin: 0 9px 0 11px; } .i7 { margin-left: 10px; }
.fps { margin: 0 7px 0 5px; gap: 2px; }
.magnet { width: 32px; height: 28px; margin-left: 5px; display: flex; align-items: center; justify-content: center; background: #8f7f77; border-radius: 2px; }
.lock { margin-left: auto; margin-right: 9px; align-self: flex-start; margin-top: 3px; }
.seq-body { flex: 1; min-height: 0; display: grid; grid-template-columns: 656px 1fr; padding-right: 2px; }
.tracks { display: flex; flex-direction: column; justify-content: space-between; }
.track-row { display: flex; align-items: center; height: 27px; padding-left: 8px; background: #414141; }
.track { display: flex; align-items: center; justify-content: center; gap: 5px; width: 60px; height: 21px; background: #738571; border: 1px solid #5b7a5a; border-radius: 2px; color: #bbb; text-shadow: 1px 1px 1px #333; }
.filter { display: flex; align-items: center; gap: 3px; margin: 0 7px 0 6px; text-shadow: 1px 1px 1px #222; }
.track-row .search { flex: 1; background: #7d7d7d; }
.track-row .search input::placeholder { color: #5e5e5e; }
.now { width: 52px; padding-left: 9px; color: #998a82; }
.transport { height: 28px; padding: 3px 0 0 199px; margin-right: 5px; background: #414141; }
.timeline { position: relative; display: flex; min-width: 0; overflow: hidden; }
.timeline svg { flex: 1; width: 100%; height: 100%; }
.timeline text { font-size: 11px; fill: #686868; }
.timeline .cur { font-size: 12px; fill: #a8a8a8; }
.empty { position: absolute; left: 369px; top: 136px; font-size: 24px; line-height: 30px; color: #eee; text-shadow: 1px 1px 1px #000; }
.mark { position: absolute; right: 10px; bottom: 9px; font: 16px/20px "Liberation Sans", sans-serif; color: #d0d0d0; text-shadow: 0 0 2px #000; }
```
FILE: script.js
```js
const NS = 'http://www.w3.org/2000/svg';

function add(parent, name, attrs, text) {
  const el = document.createElementNS(NS, name);
  for (const key in attrs) el.setAttribute(key, attrs[key]);
  if (text !== undefined) el.textContent = text;
  parent.appendChild(el);
  return el;
}

const SCALE = 2 / 3;
const ORIGIN = { x: 160, y: 87 };

// Horizontal ruler: one tick per 10 units, a label per 100
function drawRulerX() {
  const svg = document.getElementById('ruler-x');
  const width = svg.clientWidth;
  let d = '';
  for (let u = -240; u * SCALE + ORIGIN.x + 18 < width; u += 10) {
    const x = Math.round(u * SCALE + ORIGIN.x + 18) + 0.5;
    const size = u % 100 === 0 ? 6 : u % 50 === 0 ? 5 : 2;
    d += `M${x} ${17 - size}V18`;
    if (u % 100 === 0) add(svg, 'text', { x, y: 12 }, Math.abs(u));
  }
  add(svg, 'path', { d: d + `M18 17.5H${width}`, stroke: '#777', fill: 'none' });
}

// Vertical ruler: the digits of each label are stacked
function drawRulerY() {
  const svg = document.getElementById('ruler-y');
  const height = svg.clientHeight;
  let d = '';
  for (let u = -120; u * SCALE + ORIGIN.y < height; u += 10) {
    const y = Math.round(u * SCALE + ORIGIN.y) + 0.5;
    const size = u % 100 === 0 ? 6 : u % 50 === 0 ? 5 : 2;
    d += `M${17 - size} ${y}H18`;
    if (u % 100 === 0) {
      const digits = String(Math.abs(u)).split('');
      const first = (digits.length - 1) / 2;
      digits.forEach((c, i) => add(svg, 'text', { x: 7, y: y + 3 + (i - first) * 11 }, c));
    }
  }
  add(svg, 'path', { d: d + `M17.5 0V${height}`, stroke: '#777', fill: 'none' });
}

function drawGrid() {
  const svg = document.getElementById('grid');
  const w = svg.clientWidth, h = svg.clientHeight;
  const paths = { '#303030': '', '#171717': '', '#000': '' };
  const tone = i => i === 0 ? '#000' : i % 10 === 0 ? '#171717' : '#303030';
  for (let i = -15; i * 32 / 3 + ORIGIN.x < w; i++) {
    paths[tone(i)] += `M${Math.round(i * 32 / 3 + ORIGIN.x) - 0.5} 0V${h}`;
  }
  for (let i = -8; i * 32 / 3 + ORIGIN.y < h; i++) {
    paths[tone(i)] += `M0 ${Math.round(i * 32 / 3 + ORIGIN.y) - 0.5}H${w}`;
  }
  for (const color in paths) add(svg, 'path', { d: paths[color], stroke: color, fill: 'none' });
}

function drawTimeline() {
  const svg = document.getElementById('timeline');
  const w = svg.clientWidth, h = svg.clientHeight;
  const zero = 126, unit = 251.8, end = Math.round(zero + 5 * unit);
  const foot = h - 28;
  add(svg, 'rect', { width: w, height: h, fill: '#2d2d2d' });
  add(svg, 'rect', { x: zero, width: end - zero, height: h, fill: '#404040' });
  for (const [y, size] of [[0, 27], [foot, 28]]) {
    add(svg, 'rect', { y, width: w, height: size, fill: '#232323' });
    add(svg, 'rect', { x: zero, y, width: end - zero, height: size, fill: '#333' });
  }
  add(svg, 'rect', { y: foot - 2, width: w, height: 2, fill: '#454545' });
  for (let i = -2; i * unit / 4 + zero < w - 24; i++) {
    const x = Math.round(i * unit / 4 + zero) + 0.5;
    const out = i < 0 || i > 19;
    if (i > -2) {
      add(svg, 'path', { d: `M${x} 27V${foot - 2}`, stroke: out ? '#262626' : '#383838' });
      add(svg, 'path', { d: `M${x} 18V27M${x} ${foot}v9`, stroke: out ? '#777' : '#aaa' });
    }
    if (i !== 0) {
      const label = (i / 4).toFixed(2);
      for (const y of [25, foot + 11]) {
        const t = add(svg, 'text', { x: x + 5, y }, label);
        if (out) t.style.fill = '#484848';
      }
    }
  }
  add(svg, 'path', { d: `M${zero + 0.5} 0V${foot}`, stroke: '#2a8c2a', 'stroke-width': 2 });
  add(svg, 'path', { d: `M${zero - 6} 1h12v19l-6 6-6-6z`, fill: '#7a6864' });
  add(svg, 'path', { d: `M${zero - 6} ${h}v-22l6-6 6 6v22z`, fill: '#7a6864' });
  add(svg, 'text', { x: zero + 9, y: 12, class: 'cur' }, '0.00');
  add(svg, 'text', { x: zero + 9, y: foot + 29, class: 'cur' }, '0.00');
  add(svg, 'path', { d: `M${end + 0.5} 0V${h}`, stroke: '#8f1d1d' });
  add(svg, 'path', { d: `M${end - 6} 0h6v6z`, fill: '#8f1d1d' });
}

drawRulerX();
drawRulerY();
drawGrid();
drawTimeline();
```
